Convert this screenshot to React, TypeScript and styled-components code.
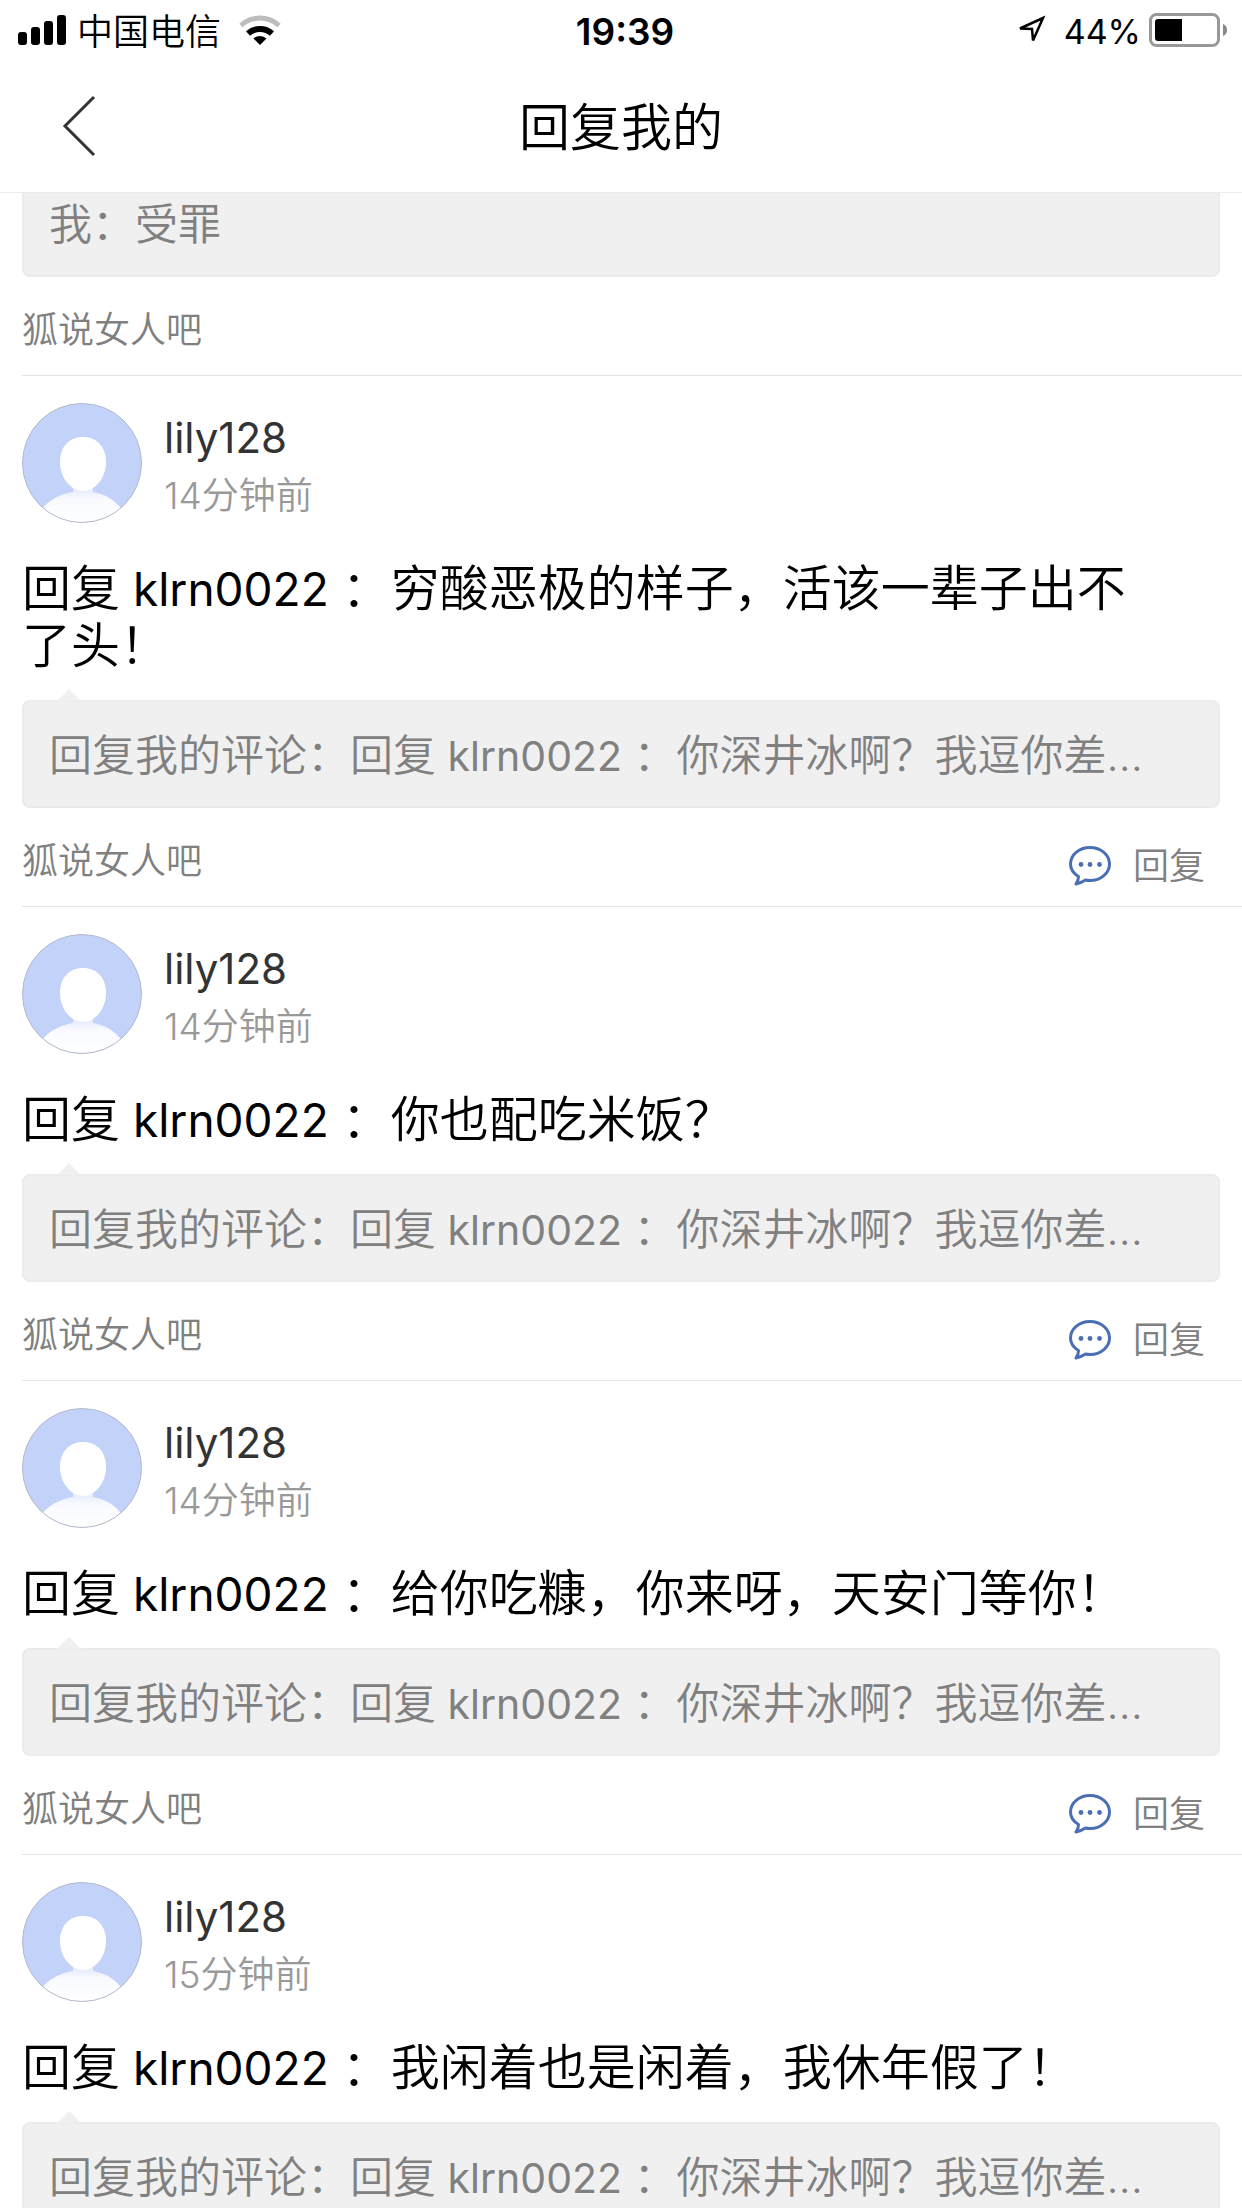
import React from "react";
import styled, { createGlobalStyle } from "styled-components";

const GlobalStyle = createGlobalStyle`
  *, *::before, *::after { box-sizing: border-box; }
  body {
    margin: 0;
    background: #fff;
    color: #000;
    font-family: Inter, "Noto Sans CJK SC", sans-serif;
    font-weight: 350;
  }
  h1, h2, p { margin: 0; font-weight: inherit; }
  button {
    margin: 0;
    padding: 0;
    border: 0;
    background: none;
    font: inherit;
    color: inherit;
    cursor: pointer;
  }
`;

const Screen = styled.div`
  display: flex;
  flex-direction: column;
  height: 100vh;
  overflow: hidden;
`;

const StatusBar = styled.div`
  display: grid;
  grid-template-columns: 1fr auto 1fr;
  align-items: center;
  height: 60px;
  padding: 0 15px 0 18px;
  font-size: 36px;
  line-height: 48px;
`;

const StatusGroup = styled.div<{ $end?: boolean }>`
  display: flex;
  align-items: center;
  justify-content: ${(p) => (p.$end ? "flex-end" : "flex-start")};
  gap: 10px;
`;

const Carrier = styled.span`
  margin-right: 8px;
  padding-top: 3px;
`;

const Clock = styled.time`
  padding: 3px 0 0 5px;
  font-size: 37px;
  font-weight: 600;
`;

const Battery = styled.span`
  display: flex;
  align-items: center;
  gap: 8px;
  margin-left: 8px;
  font-size: 34px;
  font-weight: 400;
`;

const Percent = styled.span`
  padding-top: 3px;
`;

const NavBar = styled.header`
  display: grid;
  grid-template-columns: 160px 1fr 160px;
  align-items: center;
  height: 133px;
  border-bottom: 1px solid #ececec;
`;

const BackButton = styled.button`
  display: flex;
  align-items: center;
  height: 100%;
  padding-left: 62px;
`;

const NavTitle = styled.h1`
  padding-top: 4px;
  text-align: center;
  font-size: 51px;
  line-height: 72px;
`;

const Scroller = styled.main`
  flex: 1;
  min-height: 0;
  overflow: hidden auto;
  scrollbar-width: none;
`;

const Feed = styled.ul`
  list-style: none;
  margin: -24px 0 0;
  padding: 0;
`;

const Item = styled.li`
  margin-left: 22px;
  border-bottom: 1px solid #e4e4e4;
`;

const Author = styled.div`
  display: flex;
  align-items: center;
  gap: 22px;
  padding-top: 27px;
`;

const AuthorText = styled.div`
  display: flex;
  flex-direction: column;
  gap: 4px;
  padding-top: 8px;
`;

const UserName = styled.h2`
  font-size: 42px;
  font-weight: 400;
  line-height: 54px;
  color: #333;
`;

const Time = styled.time`
  font-size: 37px;
  line-height: 54px;
  color: #999;
`;

const Mention = styled.span<{ $small?: boolean }>`
  font-size: ${(p) => (p.$small ? 41 : 46)}px;
  font-weight: 400;
  line-height: 1;
`;

const Message = styled.p`
  margin: 37px 80px 26px 0;
  font-size: 49px;
  line-height: 57px;
`;

const Quote = styled.blockquote`
  position: relative;
  height: 108px;
  margin: 0 22px 0 0;
  padding: 0 25px;
  border: 2px solid #ebebeb;
  border-radius: 8px;
  background: #f0f0f0;
  color: #808080;
  font-size: 43px;
  line-height: 106px;
  white-space: nowrap;

  &::before {
    content: "";
    position: absolute;
    left: 33px;
    top: -13px;
    border: solid transparent;
    border-width: 0 12px 12px;
    border-bottom-color: #f0f0f0;
  }
`;

const Footer = styled.footer`
  display: flex;
  align-items: center;
  justify-content: space-between;
  height: 98px;
  padding: 8px 37px 0 0;
  color: #808080;
  font-size: 36px;
  line-height: 54px;
`;

const Forum = styled.a`
  color: inherit;
  text-decoration: none;
`;

const ReplyButton = styled.button`
  display: flex;
  align-items: center;
  gap: 22px;
  padding-top: 10px;
`;

const SignalIcon = () => (
  <svg width="49" height="30" viewBox="0 0 49 30" aria-hidden="true">
    <rect x="0" y="17" width="9" height="13" rx="3" />
    <rect x="13" y="12" width="9" height="18" rx="3" />
    <rect x="26" y="6" width="9" height="24" rx="3" />
    <rect x="39" y="0" width="9" height="30" rx="3" />
  </svg>
);

const WifiIcon = () => (
  <svg width="42" height="30" viewBox="0 0 42 30" aria-hidden="true">
    <g fill="none">
      <path d="M2 10.5A28 28 0 0 1 40 10.5" stroke="#bdbdbd" strokeWidth="5" />
      <path d="M9 18.5A18 18 0 0 1 33 18.5" stroke="#000" strokeWidth="6" />
    </g>
    <path d="M21 30l-6.500-6.500a9.500 9.500 0 0 1 13 0z" />
  </svg>
);

const LocationIcon = () => (
  <svg width="30" height="30" viewBox="0 0 30 30" aria-hidden="true">
    <path d="M27 3L4 13.500L16 14L17 25.500Z" fill="none" stroke="#000" strokeWidth="2.500" />
  </svg>
);

const BatteryIcon = () => (
  <svg width="78" height="34" viewBox="0 0 78 34" aria-hidden="true">
    <rect x="1.500" y="1.500" width="68" height="31" rx="6" fill="none" stroke="#999" strokeWidth="3" />
    <path d="M33 6v22H9a3 3 0 0 1-3-3V9a3 3 0 0 1 3-3z" />
    <path d="M74 11a6.500 6.500 0 0 1 0 12z" fill="#888" />
  </svg>
);

const BackIcon = () => (
  <svg width="34" height="62" viewBox="0 0 34 62" aria-hidden="true">
    <path d="M32 2L3 31L32 60" fill="none" stroke="#333" strokeWidth="3" />
  </svg>
);

const ChatIcon = () => (
  <svg width="42" height="40" viewBox="0 0 42 40" aria-hidden="true">
    <path
      d="M9.500 30.500C4.500 27.500 1.500 23 1.500 18C1.500 9 10 1.500 21 1.500S40.500 9 40.500 18S32 34.500 21 34.500C19.500 34.500 18 34.400 16.500 34C13.500 36 10.500 37.300 7 38C8.500 36 9.500 33.500 9.500 30.500Z"
      fill="none"
      stroke="#4a6fb5"
      strokeWidth="3"
      strokeLinejoin="round"
    />
    <g fill="#4a6fb5">
      <circle cx="12" cy="18.500" r="2.400" />
      <circle cx="21" cy="18.500" r="2.400" />
      <circle cx="30.500" cy="18.500" r="2.400" />
    </g>
  </svg>
);

const Avatar = () => (
  <svg width="120" height="120" viewBox="0 0 120 120" role="img" aria-label="头像">
    <defs>
      <clipPath id="avatar-clip">
        <circle cx="60" cy="60" r="59.500" />
      </clipPath>
      <linearGradient id="avatar-body" x1="0" y1="0" x2="0" y2="1">
        <stop offset="0" stopColor="#d9e2fa" />
        <stop offset="0.400" stopColor="#f8faff" />
        <stop offset="1" stopColor="#fff" />
      </linearGradient>
    </defs>
    <g clipPath="url(#avatar-clip)">
      <rect width="120" height="120" fill="#c3d2f8" />
      <path d="M51 80H71V89C84 91 94 98 101 108V120H18V108C26 98 37 91 51 89Z" fill="url(#avatar-body)" />
      <path d="M61 34C75 34 84 44 84 59C84 75 73 88 61 88S38 75 38 59C38 44 47 34 61 34Z" fill="#fff" />
    </g>
    <circle cx="60" cy="60" r="59.500" fill="none" stroke="#b4b8cc" />
  </svg>
);

const replies = [
  { time: "14分钟前", text: "穷酸恶极的样子，活该一辈子出不了头！" },
  { time: "14分钟前", text: "你也配吃米饭？" },
  { time: "14分钟前", text: "给你吃糠，你来呀，天安门等你！" },
  { time: "15分钟前", text: "我闲着也是闲着，我休年假了！" },
];

export default function App() {
  return (
    <Screen>
      <GlobalStyle />
      <StatusBar>
        <StatusGroup>
          <SignalIcon />
          <Carrier>中国电信</Carrier>
          <WifiIcon />
        </StatusGroup>
        <Clock>19:39</Clock>
        <StatusGroup $end>
          <LocationIcon />
          <Battery>
            <Percent>44%</Percent>
            <BatteryIcon />
          </Battery>
        </StatusGroup>
      </StatusBar>
      <NavBar>
        <BackButton aria-label="返回">
          <BackIcon />
        </BackButton>
        <NavTitle>回复我的</NavTitle>
      </NavBar>
      <Scroller>
        <Feed>
          <Item>
            <Quote>我：受罪</Quote>
            <Footer>
              <Forum href="#">狐说女人吧</Forum>
            </Footer>
          </Item>
          {replies.map((reply) => (
            <Item key={reply.text}>
              <Author>
                <Avatar />
                <AuthorText>
                  <UserName>lily128</UserName>
                  <Time>{reply.time}</Time>
                </AuthorText>
              </Author>
              <Message>
                回复<Mention> klrn0022 </Mention>：{reply.text}
              </Message>
              <Quote>
                回复我的评论：回复<Mention $small> klrn0022 </Mention>：你深井冰啊？我逗你差…
              </Quote>
              <Footer>
                <Forum href="#">狐说女人吧</Forum>
                <ReplyButton>
                  <ChatIcon />
                  回复
                </ReplyButton>
              </Footer>
            </Item>
          ))}
        </Feed>
      </Scroller>
    </Screen>
  );
}
